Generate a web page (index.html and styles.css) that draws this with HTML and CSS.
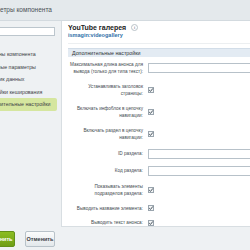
FILE: index.html
```html
<!DOCTYPE html>
<html lang="ru">
<head>
  <meta charset="UTF-8">
  <title>Параметры компонента</title>
  <link rel="stylesheet" href="styles.css">
</head>
<body>
  <div class="dialog">
    <div class="titlebar">Параметры компонента</div>

    <div class="dialog-body">
      <!-- left menu -->
      <aside class="sidebar">
        <input class="search" type="text">
        <ul class="menu">
          <li>Шаблоны компонента</li>
          <li>Основные параметры</li>
          <li>Источник данных</li>
          <li>Настройки кеширования</li>
          <li class="active">Дополнительные настройки</li>
        </ul>
      </aside>

      <!-- settings -->
      <section class="panel">
        <div class="comp-head">
          <div class="comp-title">YouTube галерея <span class="info">i</span></div>
          <a class="comp-code" href="#">ismagin:videogallery</a>
        </div>

        <div class="group-title">Дополнительные настройки</div>

        <div class="params">
          <div class="row">
            <label>Максимальная длина анонса для вывода (только для типа текст):</label>
            <input class="field" type="text">
          </div>
          <div class="row">
            <label>Устанавливать заголовок страницы:</label>
            <span class="check"><svg width="6" height="6" viewBox="0 0 6 6"><path d="M1.2 3.1 L2.5 4.4 L4.9 1.4" fill="none" stroke="#4a5560" stroke-width="1"/></svg></span>
          </div>
          <div class="row">
            <label>Включать инфоблок в цепочку навигации:</label>
            <span class="check"><svg width="6" height="6" viewBox="0 0 6 6"><path d="M1.2 3.1 L2.5 4.4 L4.9 1.4" fill="none" stroke="#4a5560" stroke-width="1"/></svg></span>
          </div>
          <div class="row">
            <label>Включать раздел в цепочку навигации:</label>
            <span class="check"><svg width="6" height="6" viewBox="0 0 6 6"><path d="M1.2 3.1 L2.5 4.4 L4.9 1.4" fill="none" stroke="#4a5560" stroke-width="1"/></svg></span>
          </div>
          <div class="row">
            <label>ID раздела:</label>
            <input class="field" type="text">
          </div>
          <div class="row">
            <label>Код раздела:</label>
            <input class="field" type="text">
          </div>
          <div class="row">
            <label>Показывать элементы подразделов раздела:</label>
            <span class="check"><svg width="6" height="6" viewBox="0 0 6 6"><path d="M1.2 3.1 L2.5 4.4 L4.9 1.4" fill="none" stroke="#4a5560" stroke-width="1"/></svg></span>
          </div>
          <div class="row">
            <label>Выводить название элемента:</label>
            <span class="check"><svg width="6" height="6" viewBox="0 0 6 6"><path d="M1.2 3.1 L2.5 4.4 L4.9 1.4" fill="none" stroke="#4a5560" stroke-width="1"/></svg></span>
          </div>
          <div class="row">
            <label>Выводить текст анонса:</label>
            <span class="check"><svg width="6" height="6" viewBox="0 0 6 6"><path d="M1.2 3.1 L2.5 4.4 L4.9 1.4" fill="none" stroke="#4a5560" stroke-width="1"/></svg></span>
          </div>
        </div>
      </section>
    </div>

    <div class="footer">
      <button class="btn btn-save">Сохранить</button>
      <button class="btn btn-cancel">Отменить</button>
    </div>
  </div>
</body>
</html>
```

FILE: styles.css
```css
html, body {
  margin: 0;
  padding: 0;
  overflow: hidden;
  background: #eef1f3;
}

body {
  font-family: "Liberation Sans", Arial, sans-serif;
  color: #3f4448;
}

.dialog {
  margin-left: -22px;
  width: 300px;
  height: 250px;
  display: flex;
  flex-direction: column;
}

.titlebar {
  height: 20px;
  line-height: 19px;
  padding-left: 2px;
  font-size: 6.5px;
  color: #4b5156;
  background: #e4e9ec;
  border-bottom: 1px solid #d3dadf;
}

.dialog-body {
  display: flex;
  height: 206px;
}

.sidebar {
  width: 83px;
  flex-shrink: 0;
  padding-top: 6px;
  box-sizing: border-box;
}

.search {
  display: block;
  margin-left: 5px;
  width: 72px;
  height: 9px;
  box-sizing: border-box;
  border: 1px solid #bcc6cd;
  background: #fff;
  padding: 0;
}

.menu {
  list-style: none;
  margin: 12px 0 0;
  padding: 0;
}

.menu li {
  height: 12.5px;
  line-height: 12.5px;
  padding-left: 4px;
  margin-right: 4px;
  font-size: 5.3px;
  color: #3d4246;
  white-space: nowrap;
}

.menu li.active {
  background: #d5e69f;
  border-radius: 0 2px 2px 0;
}

.panel {
  flex: 1;
  background: #fff;
  border-left: 1px solid #d8dee2;
  border-bottom: 1px solid #d8dee2;
  padding: 3px 0 0 6px;
}

.comp-head {
  padding-bottom: 4px;
  border-bottom: 1px solid #eceff1;
  height: 15px;
}

.comp-title {
  font-size: 7px;
  font-weight: bold;
  color: #222;
  line-height: 8px;
}

.info {
  display: inline-block;
  width: 5px;
  height: 5px;
  line-height: 5px;
  margin-left: 3px;
  border: 1px solid #b9c2c8;
  border-radius: 50%;
  font-size: 4px;
  text-align: center;
  color: #7b8a95;
  vertical-align: 1px;
}

.comp-code {
  display: block;
  font-size: 5.5px;
  font-weight: bold;
  line-height: 6px;
  color: #2f6fa8;
  text-decoration: none;
}

.group-title {
  margin-top: 4px;
  height: 9px;
  line-height: 9px;
  box-sizing: border-box;
  padding-left: 4px;
  font-size: 5.3px;
  color: #2e3338;
  background: #e3ebf3;
  border-top: 1px solid #d2dde8;
}

.params {
  display: flex;
  flex-direction: column;
}

.row {
  display: grid;
  grid-template-columns: 75px 1fr;
  column-gap: 5px;
  align-items: center;
  padding: 3.5px 0;
}

.row label {
  text-align: right;
  font-size: 4.7px;
  line-height: 7.5px;
  color: #444a4f;
}

.field {
  display: block;
  width: 100%;
  height: 10px;
  box-sizing: border-box;
  border: 1px solid #b7c1c9;
  padding: 0;
  background: #fff;
}

.check {
  display: block;
  width: 6px;
  height: 6px;
  box-sizing: border-box;
  border: 1px solid #9aa5ae;
  background: #f3f5f6;
  position: relative;
}

.check svg {
  position: absolute;
  left: -1px;
  top: -1px;
}

.footer {
  flex: 1;
  display: flex;
  gap: 10px;
  padding-top: 4px;
  align-items: flex-start;
}

.btn {
  height: 16px;
  padding: 0 4px;
  font-family: "Liberation Sans", Arial, sans-serif;
  font-size: 5.5px;
  font-weight: bold;
  border-radius: 2px;
  cursor: pointer;
}

.btn-save {
  width: 37px;
  color: #fff;
  background: linear-gradient(#8bbd22, #6f9e15);
  border: 1px solid #62901a;
}

.btn-cancel {
  width: 30px;
  padding: 0;
  color: #3b4045;
  background: linear-gradient(#fbfcfc, #e3e8eb);
  border: 1px solid #b8c2c9;
}
```
